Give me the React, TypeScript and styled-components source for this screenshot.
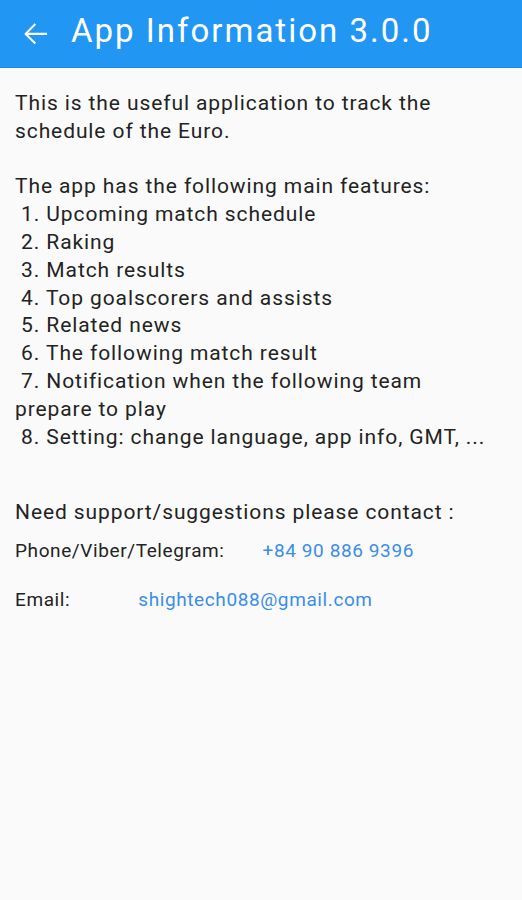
import { FC } from 'react';
import styled, { createGlobalStyle } from 'styled-components';

const GlobalStyle = createGlobalStyle`
  html, body {
    margin: 0;
    padding: 0;
    background: #fafafa;
  }
  body {
    font-family: Roboto, 'Noto Sans', sans-serif;
  }
`;

const Screen = styled.div`
  width: 522px;
  min-height: 900px;
  background: #fafafa;
`;

const AppBar = styled.header`
  display: flex;
  align-items: center;
  height: 68px;
  background: #2196f3;
  border-bottom: 1px solid #1e88e5;
  box-sizing: border-box;
  padding-left: 17px;
  color: #fff;
`;

const BackButton = styled.button`
  display: flex;
  align-items: center;
  justify-content: center;
  padding: 0;
  border: 0;
  background: none;
  color: #fff;
  width: 36px;
  height: 36px;
`;

const Title = styled.h1`
  margin: 0 0 5px 18px;
  font-size: 33px;
  line-height: 38px;
  font-weight: 400;
  letter-spacing: 2px;
`;

const Content = styled.main`
  padding: 22px 15px 0;
  color: #232323;
`;

const Paragraph = styled.div`
  font-size: 21px;
  line-height: 27.8px;
  letter-spacing: 0.9px;
  white-space: pre-wrap;
`;

const Support = styled(Paragraph)`
  margin-top: 48px;
`;

const ContactRow = styled.div<{ gap: number; top: number }>`
  display: flex;
  align-items: baseline;
  margin-top: ${({ top }) => top}px;
  font-size: 19px;
  line-height: 24px;
  letter-spacing: 0.6px;

  a {
    margin-left: ${({ gap }) => gap}px;
    color: #3a8ee6;
    text-decoration: none;
  }
`;

const about = `This is the useful application to track the
schedule of the Euro.

The app has the following main features:
 1. Upcoming match schedule
 2. Raking
 3. Match results
 4. Top goalscorers and assists
 5. Related news
 6. The following match result
 7. Notification when the following team
prepare to play
 8. Setting: change language, app info, GMT, ...`;

const App: FC = () => {
  return (
    <>
      <GlobalStyle />
      <Screen>
        <AppBar>
          <BackButton aria-label="Back">
            <svg width="36" height="36" viewBox="0 0 24 24" fill="currentColor">
              <path d="M20 11.1H7.4l5.3-5.3-1-1L4.8 12l6.9 6.9 1-1-5.3-5.3H20z" />
            </svg>
          </BackButton>
          <Title>App Information 3.0.0</Title>
        </AppBar>

        <Content>
          <Paragraph>{about}</Paragraph>

          <Support>Need support/suggestions please contact :</Support>

          <ContactRow gap={38} top={12}>
            <span>Phone/Viber/Telegram:</span>
            <a href="tel:+84908869396">+84 90 886 9396</a>
          </ContactRow>

          <ContactRow gap={68} top={25}>
            <span>Email:</span>
            <a href="mailto:shightech088@gmail.com">shightech088@gmail.com</a>
          </ContactRow>
        </Content>
      </Screen>
    </>
  );
};

export default App;
